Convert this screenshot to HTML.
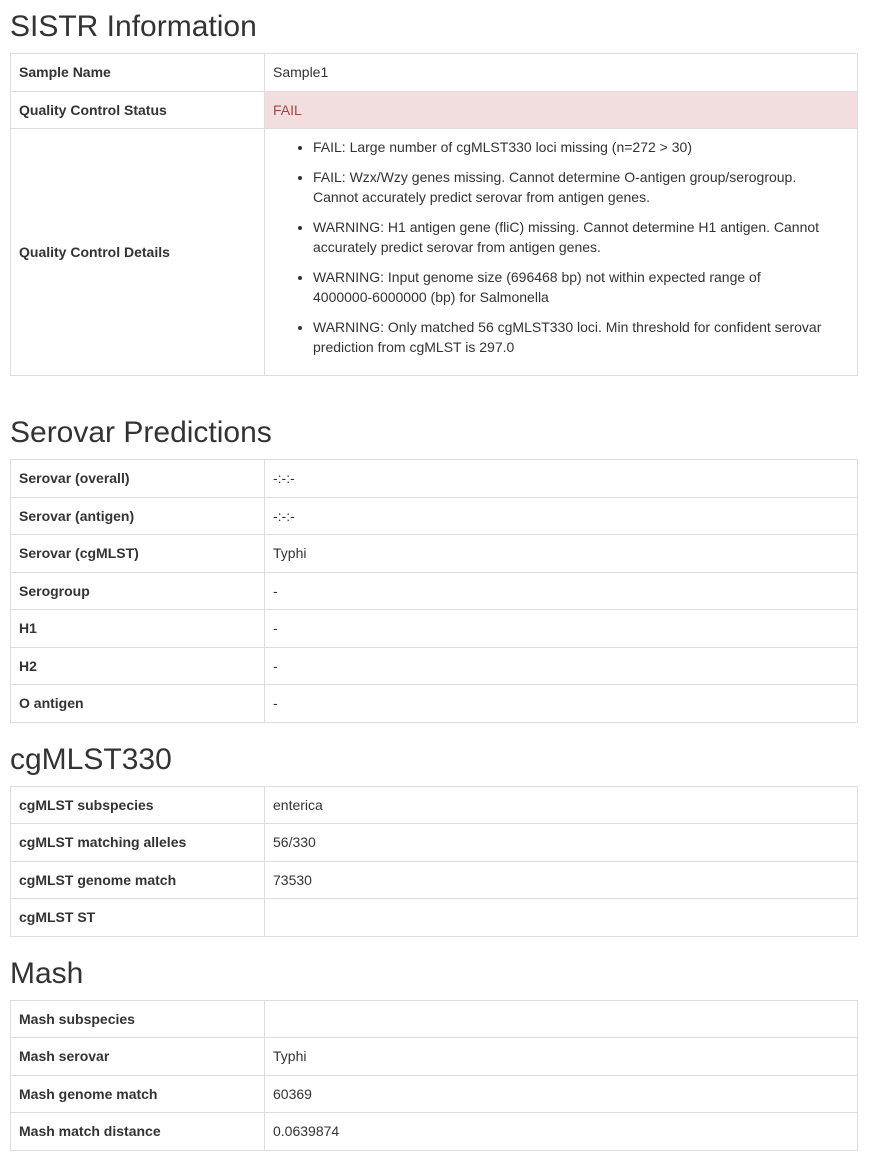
<!DOCTYPE html>
<html><head><meta charset="utf-8"><style>
body{margin:0;padding:0 11px 0 10px;font-family:"Liberation Sans",Helvetica,Arial,sans-serif;font-size:14px;color:#333;background:#fff;width:848px}
h2{font-size:30px;font-weight:500;line-height:33px;margin:0 0 10px 0;color:#333}
h2.first{margin-top:10px}
table{width:848px;border-collapse:collapse;margin-bottom:20px;table-layout:fixed}
td{border:1px solid #ddd;padding:8px 8px;line-height:20.5px;vertical-align:middle}
td:first-child{width:237px;font-weight:bold}
td.danger{background:#f2dede;color:#a94442}
td.det{line-height:20px}
ul{margin:0;padding-left:40px;padding-right:12px}
li{margin-bottom:10px}
.nw{white-space:nowrap}
.gap{height:20px}
</style></head><body>
<h2 class="first">SISTR Information</h2>
<table>
<tr><td>Sample Name</td><td>Sample1</td></tr>
<tr><td>Quality Control Status</td><td class="danger">FAIL</td></tr>
<tr><td>Quality Control Details</td><td class="det"><ul>
<li>FAIL: Large number of cgMLST330 loci missing (n=272 &gt; 30)</li>
<li>FAIL: Wzx/Wzy genes missing. Cannot determine O-antigen group/serogroup. Cannot accurately predict serovar from antigen genes.</li>
<li>WARNING: H1 antigen gene (fliC) missing. Cannot determine H1 antigen. Cannot accurately predict serovar from antigen genes.</li>
<li>WARNING: Input genome size (696468 bp) not within expected range of <span class="nw">4000000-6000000</span> (bp) for Salmonella</li>
<li>WARNING: Only matched 56 cgMLST330 loci. Min threshold for confident serovar prediction from cgMLST is 297.0</li>
</ul></td></tr>
</table>
<div class="gap"></div>
<h2>Serovar Predictions</h2>
<table>
<tr><td>Serovar (overall)</td><td>-:-:-</td></tr>
<tr><td>Serovar (antigen)</td><td>-:-:-</td></tr>
<tr><td>Serovar (cgMLST)</td><td>Typhi</td></tr>
<tr><td>Serogroup</td><td>-</td></tr>
<tr><td>H1</td><td>-</td></tr>
<tr><td>H2</td><td>-</td></tr>
<tr><td>O antigen</td><td>-</td></tr>
</table>
<h2>cgMLST330</h2>
<table>
<tr><td>cgMLST subspecies</td><td>enterica</td></tr>
<tr><td>cgMLST matching alleles</td><td>56/330</td></tr>
<tr><td>cgMLST genome match</td><td>73530</td></tr>
<tr><td>cgMLST ST</td><td></td></tr>
</table>
<h2>Mash</h2>
<table>
<tr><td>Mash subspecies</td><td></td></tr>
<tr><td>Mash serovar</td><td>Typhi</td></tr>
<tr><td>Mash genome match</td><td>60369</td></tr>
<tr><td>Mash match distance</td><td>0.0639874</td></tr>
</table>
</body></html>
